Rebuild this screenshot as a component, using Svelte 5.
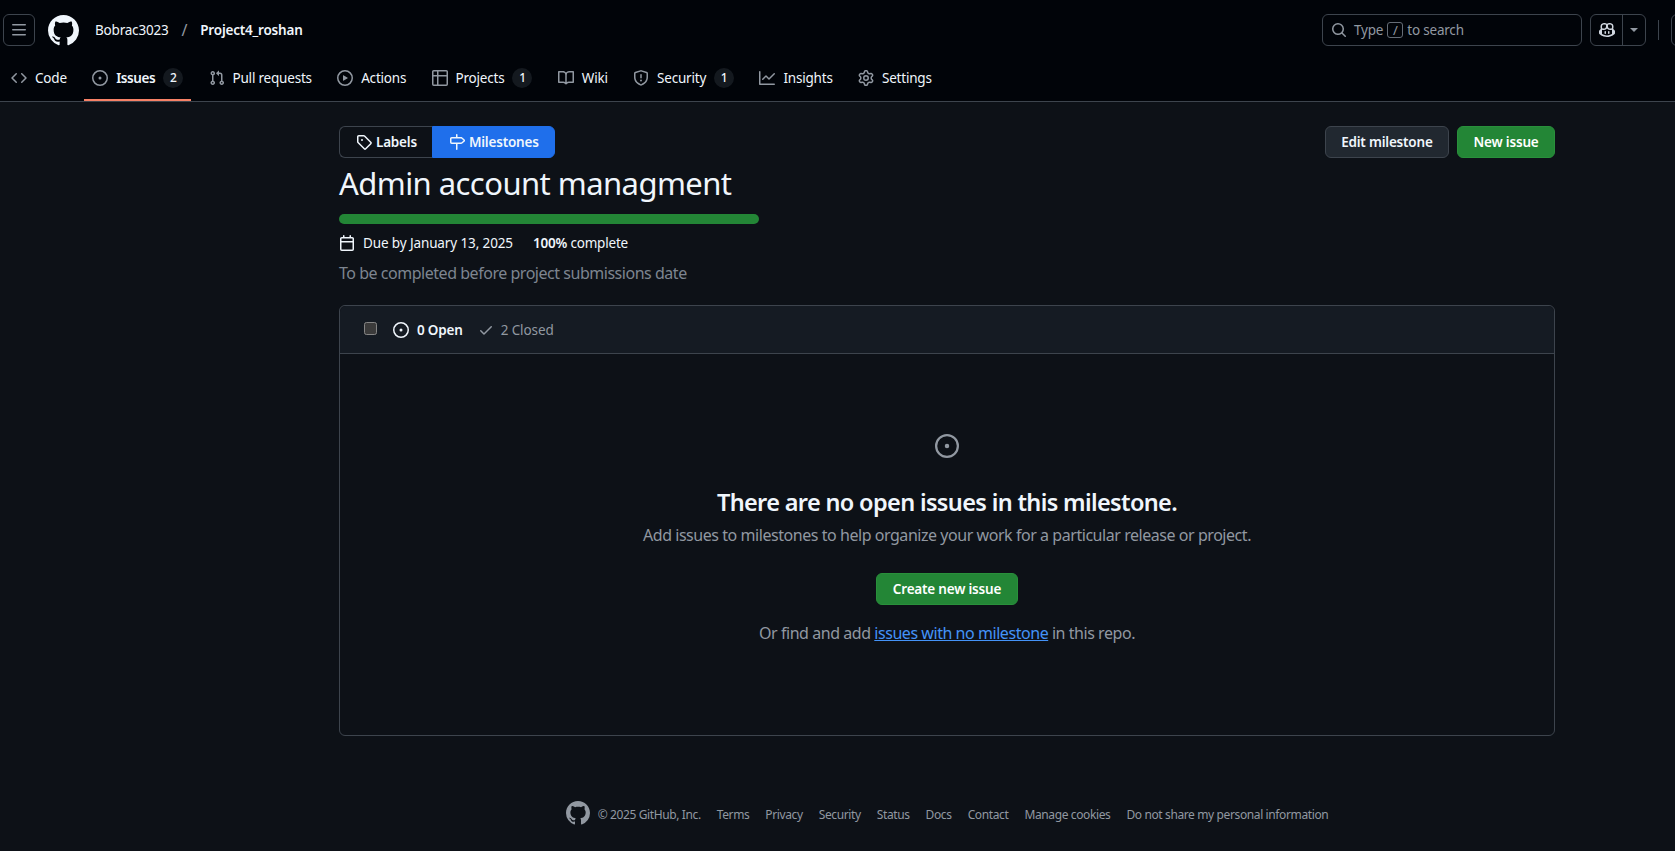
<script lang="ts">
  const icons: Record<string, string> = {
    mark: 'M8 0c4.42 0 8 3.58 8 8a8.013 8.013 0 0 1-5.45 7.59c-.4.08-.55-.17-.55-.38 0-.27.01-1.13.01-2.2 0-.75-.25-1.23-.54-1.48 1.78-.2 3.65-.88 3.65-3.95 0-.88-.31-1.59-.82-2.15.08-.2.36-1.02-.08-2.12 0 0-.67-.22-2.2.82-.64-.18-1.32-.27-2-.27-.68 0-1.36.09-2 .27-1.53-1.03-2.2-.82-2.2-.82-.44 1.1-.16 1.92-.08 2.12-.51.56-.82 1.28-.82 2.15 0 3.06 1.86 3.75 3.64 3.95-.23.2-.44.55-.51 1.07-.46.21-1.61.55-2.33-.66-.15-.24-.6-.83-1.23-.82-.67.01-.27.38.01.53.34.19.73.9.82 1.13.16.45.68 1.31 2.69.94 0 .67.01 1.3.01 1.49 0 .21-.15.45-.55.38A7.995 7.995 0 0 1 0 8c0-4.42 3.58-8 8-8Z',
    bars: 'M1 2.75A.75.75 0 0 1 1.75 2h12.5a.75.75 0 0 1 0 1.5H1.75A.75.75 0 0 1 1 2.75Zm0 5A.75.75 0 0 1 1.75 7h12.5a.75.75 0 0 1 0 1.5H1.75A.75.75 0 0 1 1 7.75ZM1.75 12h12.5a.75.75 0 0 1 0 1.5H1.75a.75.75 0 0 1 0-1.5Z',
    code: 'm11.28 3.22 4.25 4.25a.75.75 0 0 1 0 1.06l-4.25 4.25a.749.749 0 0 1-1.275-.326.749.749 0 0 1 .215-.734L13.94 8l-3.72-3.72a.749.749 0 0 1 .326-1.275.749.749 0 0 1 .734.215Zm-6.56 0a.751.751 0 0 1 1.042.018.751.751 0 0 1 .018 1.042L2.06 8l3.72 3.72a.749.749 0 0 1-.326 1.275.749.749 0 0 1-.734-.215L.47 8.53a.75.75 0 0 1 0-1.06Z',
    issue: 'M8 9.5a1.5 1.5 0 1 0 0-3 1.5 1.5 0 0 0 0 3ZM8 0a8 8 0 1 1 0 16A8 8 0 0 1 8 0ZM1.5 8a6.5 6.5 0 1 0 13 0 6.5 6.5 0 0 0-13 0Z',
    pr: 'M1.5 3.25a2.25 2.25 0 1 1 3 2.122v5.256a2.251 2.251 0 1 1-1.5 0V5.372A2.25 2.25 0 0 1 1.5 3.25Zm5.677-.177L9.573.677A.25.25 0 0 1 10 .854V2.5h1A2.5 2.5 0 0 1 13.5 5v5.628a2.251 2.251 0 1 1-1.5 0V5a1 1 0 0 0-1-1h-1v1.646a.25.25 0 0 1-.427.177L7.177 3.427a.25.25 0 0 1 0-.354ZM3.75 2.5a.75.75 0 1 0 0 1.5.75.75 0 0 0 0-1.5Zm0 9.5a.75.75 0 1 0 0 1.5.75.75 0 0 0 0-1.5Zm8.25.75a.75.75 0 1 0 1.5 0 .75.75 0 0 0-1.5 0Z',
    play: 'M8 0a8 8 0 1 1 0 16A8 8 0 0 1 8 0ZM1.5 8a6.5 6.5 0 1 0 13 0 6.5 6.5 0 0 0-13 0Zm4.879-2.773 4.264 2.559a.25.25 0 0 1 0 .428l-4.264 2.559A.25.25 0 0 1 6 10.559V5.442a.25.25 0 0 1 .379-.215Z',
    table: 'M0 1.75C0 .784.784 0 1.75 0h12.5C15.216 0 16 .784 16 1.75v12.5A1.75 1.75 0 0 1 14.25 16H1.75A1.75 1.75 0 0 1 0 14.25ZM6.5 6.5v8h7.75a.25.25 0 0 0 .25-.25V6.5Zm8-1.5V1.75a.25.25 0 0 0-.25-.25H6.5V5Zm-13 1.5v7.75c0 .138.112.25.25.25H5v-8ZM5 5V1.5H1.75a.25.25 0 0 0-.25.25V5Z',
    book: 'M0 1.75A.75.75 0 0 1 .75 1h4.253c1.227 0 2.317.59 3 1.501A3.743 3.743 0 0 1 11.006 1h4.245a.75.75 0 0 1 .75.75v10.5a.75.75 0 0 1-.75.75h-4.507a2.25 2.25 0 0 0-1.591.659l-.622.621a.75.75 0 0 1-1.06 0l-.622-.621A2.25 2.25 0 0 0 5.258 13H.75a.75.75 0 0 1-.75-.75Zm7.251 10.324.004-5.073-.002-2.253A2.25 2.25 0 0 0 5.003 2.5H1.5v9h3.757a3.75 3.75 0 0 1 1.994.574ZM8.755 4.75l-.004 7.322a3.752 3.752 0 0 1 1.992-.572H14.5v-9h-3.495a2.25 2.25 0 0 0-2.25 2.25Z',
    shield: 'M7.467.133a1.748 1.748 0 0 1 1.066 0l5.25 1.68A1.75 1.75 0 0 1 15 3.48V7c0 1.566-.32 3.182-1.303 4.682-.983 1.498-2.585 2.813-5.032 3.855a1.697 1.697 0 0 1-1.33 0c-2.447-1.042-4.049-2.357-5.032-3.855C1.32 10.182 1 8.566 1 7V3.48a1.75 1.75 0 0 1 1.217-1.667Zm.61 1.429a.25.25 0 0 0-.153 0l-5.25 1.68a.25.25 0 0 0-.174.238V7c0 1.358.275 2.666 1.057 3.86.784 1.194 2.121 2.34 4.366 3.297a.196.196 0 0 0 .154 0c2.245-.956 3.582-2.104 4.366-3.298C13.225 9.666 13.5 8.36 13.5 7V3.48a.251.251 0 0 0-.174-.237l-5.25-1.68ZM8.75 4.75v3a.75.75 0 0 1-1.5 0v-3a.75.75 0 0 1 1.5 0ZM9 10.5a1 1 0 1 1-2 0 1 1 0 0 1 2 0Z',
    graph: 'M1.5 1.75V13.5h13.75a.75.75 0 0 1 0 1.5H.75a.75.75 0 0 1-.75-.75V1.75a.75.75 0 0 1 1.5 0Zm14.28 2.53-5.25 5.25a.75.75 0 0 1-1.06 0L7 7.06 4.28 9.78a.751.751 0 0 1-1.042-.018.751.751 0 0 1-.018-1.042l3.25-3.25a.75.75 0 0 1 1.06 0L10 7.94l4.72-4.72a.751.751 0 0 1 1.042.018.751.751 0 0 1 .018 1.042Z',
    gear: 'M8 0a8.2 8.2 0 0 1 .701.031C9.444.095 9.99.645 10.16 1.29l.288 1.107c.018.066.079.158.212.224.231.114.454.243.668.386.123.082.233.09.299.071l1.103-.303c.644-.176 1.392.021 1.82.63.27.385.506.792.704 1.218.315.675.111 1.422-.364 1.891l-.814.806c-.049.048-.098.147-.088.294.016.257.016.515 0 .772-.01.147.038.246.088.294l.814.806c.475.469.679 1.216.364 1.891a7.977 7.977 0 0 1-.704 1.217c-.428.61-1.176.807-1.82.63l-1.102-.302c-.067-.019-.177-.011-.3.071a5.909 5.909 0 0 1-.668.386c-.133.066-.194.158-.211.224l-.29 1.106c-.168.646-.715 1.196-1.458 1.26a8.006 8.006 0 0 1-1.402 0c-.743-.064-1.289-.614-1.458-1.26l-.289-1.106c-.018-.066-.079-.158-.212-.224a5.738 5.738 0 0 1-.668-.386c-.123-.082-.233-.09-.299-.071l-1.103.303c-.644.176-1.392-.021-1.82-.63a8.12 8.12 0 0 1-.704-1.218c-.315-.675-.111-1.422.363-1.891l.815-.806c.05-.048.098-.147.088-.294a6.214 6.214 0 0 1 0-.772c.01-.147-.038-.246-.088-.294l-.815-.806C.635 6.045.431 5.298.746 4.623a7.92 7.92 0 0 1 .704-1.217c.428-.61 1.176-.807 1.82-.63l1.102.302c.067.019.177.011.3-.071.214-.143.437-.272.668-.386.133-.066.194-.158.211-.224l.29-1.106C6.009.645 6.556.095 7.299.03 7.53.01 7.764 0 8 0Zm-.571 1.525c-.036.003-.108.036-.137.146l-.289 1.105c-.147.561-.549.967-.998 1.189-.173.086-.34.183-.5.29-.417.278-.97.423-1.529.27l-1.103-.303c-.109-.03-.175.016-.195.045-.22.312-.412.644-.573.99-.014.031-.021.11.059.19l.815.806c.411.406.562.957.53 1.456a4.709 4.709 0 0 0 0 .582c.032.499-.119 1.05-.53 1.456l-.815.806c-.081.08-.073.159-.059.19.162.346.353.677.573.989.02.03.085.076.195.046l1.102-.303c.56-.153 1.113-.008 1.53.27.161.107.328.204.501.29.447.222.85.629.997 1.189l.289 1.105c.029.109.101.143.137.146a6.6 6.6 0 0 0 1.142 0c.036-.003.108-.036.137-.146l.289-1.105c.147-.561.549-.967.998-1.189.173-.086.34-.183.5-.29.417-.278.97-.423 1.529-.27l1.103.303c.109.029.175-.016.195-.045.22-.313.411-.644.573-.99.014-.031.021-.11-.059-.19l-.815-.806c-.411-.406-.562-.957-.53-1.456a4.709 4.709 0 0 0 0-.582c-.032-.499.119-1.05.53-1.456l.815-.806c.081-.08.073-.159.059-.19a6.464 6.464 0 0 0-.573-.989c-.02-.03-.085-.076-.195-.046l-1.102.303c-.56.153-1.113.008-1.53-.27a4.44 4.44 0 0 0-.501-.29c-.447-.222-.85-.629-.997-1.189l-.289-1.105c-.029-.11-.101-.143-.137-.146a6.6 6.6 0 0 0-1.142 0ZM11 8a3 3 0 1 1-6 0 3 3 0 0 1 6 0ZM9.5 8a1.5 1.5 0 1 0-3.001.001A1.5 1.5 0 0 0 9.5 8Z',
    search: 'M10.68 11.74a6 6 0 0 1-7.922-8.982 6 6 0 0 1 8.982 7.922l3.04 3.04a.749.749 0 0 1-.326 1.275.749.749 0 0 1-.734-.215ZM11.5 7a4.499 4.499 0 1 0-8.997 0A4.499 4.499 0 0 0 11.5 7Z',
    tag: 'M1 7.775V2.75C1 1.784 1.784 1 2.75 1h5.025c.464 0 .91.184 1.238.513l6.25 6.25a1.75 1.75 0 0 1 0 2.474l-5.026 5.026a1.75 1.75 0 0 1-2.474 0l-6.25-6.25A1.752 1.752 0 0 1 1 7.775Zm1.5 0c0 .066.026.13.073.177l6.25 6.25a.25.25 0 0 0 .354 0l5.025-5.025a.25.25 0 0 0 0-.354l-6.25-6.25a.25.25 0 0 0-.177-.073H2.75a.25.25 0 0 0-.25.25ZM6 5a1 1 0 1 1 0 2 1 1 0 0 1 0-2Z',
    milestone: 'M7.75 0a.75.75 0 0 1 .75.75V3h3.634c.414 0 .814.147 1.13.414l2.07 1.75a1.75 1.75 0 0 1 0 2.672l-2.07 1.75a1.75 1.75 0 0 1-1.13.414H8.5v5.25a.75.75 0 0 1-1.5 0V10H2.75A1.75 1.75 0 0 1 1 8.25v-3.5C1 3.784 1.784 3 2.75 3H7V.75A.75.75 0 0 1 7.75 0Zm4.384 8.5a.25.25 0 0 0 .161-.059l2.07-1.75a.248.248 0 0 0 0-.382l-2.07-1.75a.25.25 0 0 0-.161-.059H2.75a.25.25 0 0 0-.25.25v3.5c0 .138.112.25.25.25h9.384Z',
    calendar: 'M4.75 0a.75.75 0 0 1 .75.75V2h5V.75a.75.75 0 0 1 1.5 0V2h1.25c.966 0 1.75.784 1.75 1.75v10.5A1.75 1.75 0 0 1 13.25 16H2.75A1.75 1.75 0 0 1 1 14.25V3.75C1 2.784 1.784 2 2.75 2H4V.75A.75.75 0 0 1 4.75 0ZM2.5 7.5v6.75c0 .138.112.25.25.25h10.5a.25.25 0 0 0 .25-.25V7.5Zm10.75-4H2.75a.25.25 0 0 0-.25.25V6h11V3.75a.25.25 0 0 0-.25-.25Z',
    check: 'M13.78 4.22a.75.75 0 0 1 0 1.06l-7.25 7.25a.75.75 0 0 1-1.06 0L2.22 9.28a.751.751 0 0 1 .018-1.042.751.751 0 0 1 1.042-.018L6 10.94l6.72-6.72a.75.75 0 0 1 1.06 0Z',
    copilot: 'M7.998 15.035c-4.562 0-7.873-2.914-7.998-3.749V9.338c.085-.628.677-1.686 1.588-2.065.013-.07.024-.143.036-.218.029-.183.06-.384.126-.612-.201-.508-.254-1.084-.254-1.656 0-.87.128-1.769.693-2.484.579-.733 1.494-1.124 2.724-1.261 1.206-.134 2.262.034 2.944.765.05.053.096.108.139.165.044-.057.094-.112.143-.165.682-.731 1.738-.899 2.944-.765 1.23.137 2.145.528 2.724 1.261.566.715.693 1.614.693 2.484 0 .572-.053 1.148-.254 1.656.066.228.098.429.126.612.012.076.024.148.037.218.924.385 1.522 1.471 1.591 2.095v1.872c0 .766-3.351 3.795-8.002 3.795Zm0-1.485c2.28 0 4.584-1.11 5.002-1.433V7.862l-.023-.116c-.49.21-1.075.291-1.727.291-1.146 0-2.059-.327-2.71-.991A3.222 3.222 0 0 1 8 6.303a3.24 3.24 0 0 1-.544.743c-.65.664-1.563.991-2.71.991-.652 0-1.236-.081-1.727-.291l-.023.116v4.255c.419.323 2.722 1.433 5.002 1.433ZM6.762 2.83c-.193-.206-.637-.413-1.682-.297-1.019.113-1.479.404-1.713.7-.247.312-.369.789-.369 1.554 0 .793.129 1.171.308 1.371.162.181.519.379 1.442.379.853 0 1.339-.235 1.638-.54.315-.322.527-.827.617-1.553.117-.935-.037-1.395-.241-1.614Zm4.155-.297c-1.044-.116-1.488.091-1.681.297-.204.219-.359.679-.242 1.614.091.726.303 1.231.618 1.553.299.305.784.54 1.638.54.922 0 1.28-.198 1.442-.379.179-.2.308-.578.308-1.371 0-.765-.123-1.242-.37-1.554-.233-.296-.693-.587-1.713-.7ZM6.25 9.037a.75.75 0 0 1 .75.75v1.501a.75.75 0 0 1-1.5 0V9.787a.75.75 0 0 1 .75-.75Zm4.25.75v1.501a.75.75 0 0 1-1.5 0V9.787a.75.75 0 0 1 1.5 0Z'
  }

  const tabs = [
    { icon: 'code', label: 'Code' },
    { icon: 'issue', label: 'Issues', count: 2, active: true },
    { icon: 'pr', label: 'Pull requests' },
    { icon: 'play', label: 'Actions' },
    { icon: 'table', label: 'Projects', count: 1 },
    { icon: 'book', label: 'Wiki' },
    { icon: 'shield', label: 'Security', count: 1 },
    { icon: 'graph', label: 'Insights' },
    { icon: 'gear', label: 'Settings' }
  ]

  const footerLinks = ['Terms', 'Privacy', 'Security', 'Status', 'Docs', 'Contact', 'Manage cookies', 'Do not share my personal information']
</script>

{#snippet icon(name: string, size = 16)}
  <svg class="octicon" viewBox="0 0 16 16" width={size} height={size} fill="currentColor" aria-hidden="true">
    <path fill-rule="evenodd" d={icons[name]} />
  </svg>
{/snippet}

<div class="page">
  <header class="app-header">
    <div class="top-bar">
      <button class="icon-btn">{@render icon('bars')}</button>
      <span class="logo">{@render icon('mark', 31)}</span>
      <span class="crumb owner">Bobrac3023</span>
      <span class="slash">/</span>
      <span class="crumb repo">Project4_roshan</span>

      <div class="top-right">
        <div class="search">
          {@render icon('search')}
          <span class="placeholder">Type <kbd>/</kbd> to search</span>
        </div>
        <div class="copilot">
          <span class="copilot-main">{@render icon('copilot')}</span>
          <span class="copilot-caret"><i></i></span>
        </div>
        <span class="divider"></span>
        <button class="icon-btn wide"></button>
        <button class="icon-btn"></button>
        <button class="icon-btn"></button>
        <button class="icon-btn"></button>
        <button class="icon-btn"></button>
      </div>
    </div>

    <nav class="tabs">
      {#each tabs as tab}
        <a class="tab" class:active={tab.active} href="#top">
          <span class="tab-icon">{@render icon(tab.icon)}</span>
          <span class="tab-label">{tab.label}</span>
          {#if tab.count}<span class="counter">{tab.count}</span>{/if}
        </a>
      {/each}
    </nav>
  </header>

  <main class="container">
    <div class="actions">
      <div class="seg">
        <a class="seg-item" href="#top">{@render icon('tag')}Labels</a>
        <a class="seg-item selected" href="#top">{@render icon('milestone')}Milestones</a>
      </div>
      <div class="action-btns">
        <button class="btn">Edit milestone</button>
        <button class="btn primary">New issue</button>
      </div>
    </div>

    <h1 class="title">Admin account managment</h1>
    <div class="progress"><div class="progress-fill" style="width: 100%"></div></div>
    <div class="meta">
      {@render icon('calendar')}
      <span class="due">Due by January 13, 2025</span>
      <span><strong>100%</strong> complete</span>
    </div>
    <p class="desc">To be completed before project submissions date</p>

    <section class="box">
      <div class="box-header">
        <input type="checkbox" class="check" aria-label="Select all" />
        <span class="state open">{@render icon('issue')}0 Open</span>
        <span class="state closed">{@render icon('check')}2 Closed</span>
      </div>
      <div class="blank">
        <span class="blank-icon">{@render icon('issue', 24)}</span>
        <h2>There are no open issues in this milestone.</h2>
        <p class="blank-text">Add issues to milestones to help organize your work for a particular release or project.</p>
        <button class="btn primary">Create new issue</button>
        <p class="blank-foot">Or find and add <a href="#top">issues with no milestone</a> in this repo.</p>
      </div>
    </section>
  </main>

  <footer class="footer">
    <span class="foot-logo">{@render icon('mark', 24)}</span>
    <span class="copy">© 2025 GitHub, Inc.</span>
    {#each footerLinks as link}
      <a href="#top">{link}</a>
    {/each}
  </footer>
</div>

<style>
  :global(html), :global(body) {
    overflow: hidden;
    background: #0d1117;
  }

  .page {
    width: 1894px;
    height: 851px;
    background: #0d1117;
    color: #f0f6fc;
    font-family: "Noto Sans", "Open Sans", sans-serif;
    font-size: 13.5px;
    line-height: 20px;
    letter-spacing: -0.2px;
  }

  .octicon { display: block; flex-shrink: 0; }

  .app-header {
    background: #010409;
    border-bottom: 1px solid #3d444d;
  }

  .top-bar {
    display: flex;
    align-items: center;
    height: 32px;
    padding: 14px 15px 14px 3px;
  }

  .icon-btn {
    width: 32px;
    height: 32px;
    padding: 0;
    display: flex;
    align-items: center;
    justify-content: center;
    flex-shrink: 0;
    background: none;
    border: 1px solid #3d444d;
    border-radius: 6px;
    color: #9198a1;
  }
  .icon-btn.wide { width: 48px; }

  .logo { margin: 0 16px 0 13px; color: #f0f6fc; }

  .owner { color: #f0f6fc; }
  .repo { font-weight: 600; }
  .slash { color: #9198a1; margin: 0 13px; font-size: 16px; }

  .top-right {
    margin-left: auto;
    display: flex;
    align-items: center;
    gap: 8px;
  }

  .search {
    width: 258px;
    height: 30px;
    border: 1px solid #3d444d;
    border-radius: 6px;
    display: flex;
    align-items: center;
    gap: 7px;
    color: #9198a1;
  }
  .search .octicon { margin-left: 8px; }

  .placeholder { display: flex; align-items: center; gap: 4px; }

  kbd {
    width: 14px;
    height: 14px;
    border: 1px solid #656c76;
    border-radius: 3px;
    font: inherit;
    font-size: 13px;
    line-height: 14px;
    text-align: center;
  }

  .copilot {
    display: flex;
    height: 30px;
    border: 1px solid #3d444d;
    border-radius: 6px;
    color: #9198a1;
  }
  .copilot-main {
    width: 31px;
    display: flex;
    align-items: center;
    justify-content: center;
    border-right: 1px solid #3d444d;
    color: #d1d7e0;
  }
  .copilot-caret {
    width: 22px;
    display: flex;
    align-items: center;
    justify-content: center;
  }
  .copilot-caret i {
    border: 4px solid transparent;
    border-top-color: #9198a1;
    border-bottom: 0;
  }

  .divider {
    width: 1px;
    height: 20px;
    background: #3d444d;
    margin: 0 4px;
  }

  .tabs {
    display: flex;
    gap: 9.3px;
    height: 41px;
    padding-left: 3px;
  }

  .tab {
    display: flex;
    align-items: center;
    gap: 8px;
    height: 35px;
    padding: 0 8px 6px;
    color: #f0f6fc;
    text-decoration: none;
    position: relative;
  }
  .tab-icon { color: #9198a1; }
  .tab.active { font-weight: 600; letter-spacing: -0.4px; }
  .tab.active::after {
    content: "";
    position: absolute;
    left: 0;
    right: 0;
    bottom: 0;
    height: 2px;
    background: #f78166;
  }

  .counter {
    min-width: 20px;
    height: 20px;
    border-radius: 10px;
    background: rgba(101, 108, 118, 0.2);
    font-size: 12px;
    font-weight: 500;
    line-height: 20px;
    text-align: center;
  }

  .container {
    width: 1216px;
    margin: 0 auto;
    padding-top: 24px;
  }

  .actions {
    display: flex;
    justify-content: space-between;
  }

  .seg { display: flex; }

  .seg-item {
    display: flex;
    align-items: center;
    gap: 4px;
    height: 30px;
    padding: 0 15px 0 16px;
    border: 1px solid #3d444d;
    color: #f0f6fc;
    font-weight: 600;
    text-decoration: none;
  }
  .seg-item:first-child { border-radius: 6px 0 0 6px; border-right: 0; }
  .seg-item.selected {
    background: #1f6feb;
    border-color: #1f6feb;
    border-radius: 0 6px 6px 0;
  }

  .action-btns { display: flex; gap: 8px; }

  .btn {
    height: 32px;
    padding: 0 15.5px;
    border: 1px solid #3d444d;
    border-radius: 6px;
    background: #212830;
    color: #f0f6fc;
    font: inherit;
    font-weight: 600;
    letter-spacing: inherit;
  }
  .btn.primary { background: #238636; border-color: #29903b; color: #fff; }

  .title {
    margin: 5px 0 0;
    font-size: 31px;
    font-weight: 400;
    line-height: 40px;
    letter-spacing: -0.56px;
    color: #f0f6fc;
  }

  .progress {
    width: 420px;
    height: 10px;
    margin-top: 11px;
    border-radius: 6px;
    background: #3d444d;
    overflow: hidden;
  }
  .progress-fill { height: 100%; background: #238636; }

  .meta {
    display: flex;
    align-items: center;
    margin-top: 9px;
  }
  .meta .octicon { margin-right: 8px; }
  .due { margin-right: 20px; letter-spacing: -0.12px; }
  .meta strong { font-weight: 600; }

  .desc {
    margin: 8px 0 0;
    font-size: 16px;
    line-height: 24px;
    letter-spacing: -0.47px;
    color: #7d8590;
  }

  .box {
    margin-top: 20px;
    border: 1px solid #3d444d;
    border-radius: 6px;
  }

  .box-header {
    display: flex;
    align-items: center;
    height: 47px;
    padding-left: 24px;
    background: #151b23;
    border-bottom: 1px solid #3d444d;
    border-radius: 6px 6px 0 0;
  }

  .check {
    width: 13px;
    height: 13px;
    margin: -3px 16px 0 0;
    color-scheme: dark;
  }

  .state {
    display: flex;
    align-items: center;
    gap: 7px;
  }
  .state.open { font-weight: 600; gap: 8px; }
  .state.closed { margin-left: 15px; color: #9198a1; letter-spacing: -0.1px; }

  .blank {
    height: 381px;
    padding-top: 80px;
    box-sizing: border-box;
    display: flex;
    flex-direction: column;
    align-items: center;
  }

  .blank-icon { color: #9198a1; margin-bottom: 26px; }

  h2 {
    margin: 0;
    font-size: 23.5px;
    font-weight: 600;
    line-height: 36px;
    letter-spacing: -0.65px;
  }

  .blank-text {
    margin: 3px 0 0;
    font-size: 16px;
    line-height: 24px;
    letter-spacing: -0.45px;
    color: #9198a1;
  }

  .blank .btn { margin-top: 26px; }

  .blank-foot {
    margin: 16px 0 0;
    font-size: 16px;
    line-height: 24px;
    letter-spacing: -0.45px;
    color: #9198a1;
  }
  .blank-foot a { color: #4493f8; text-decoration: underline; }

  .footer {
    display: flex;
    align-items: center;
    justify-content: center;
    gap: 16px;
    margin-top: 65px;
    font-size: 12px;
    letter-spacing: -0.38px;
    color: #9198a1;
  }
  .footer a { color: #9198a1; text-decoration: none; }
  .foot-logo { margin: 0 -8px 4px 0; }
</style>
